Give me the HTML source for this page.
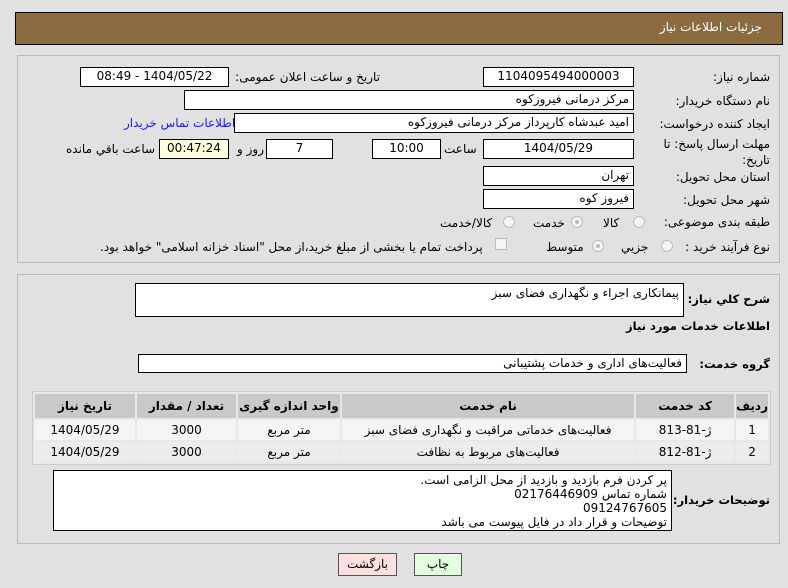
<!DOCTYPE html>
<html><head><meta charset="utf-8"><style>
body{margin:0;width:788px;height:588px;background:#e1e1e1;font-family:"DejaVu Sans","Liberation Sans",sans-serif;font-size:12px;color:#000;position:relative;overflow:hidden;direction:rtl}
.a{position:absolute;white-space:nowrap}
.box{position:absolute;background:#fff;border:1px solid #000;box-sizing:border-box;padding:0 4px;line-height:17px;white-space:nowrap;overflow:hidden}
.c{text-align:center}
.r{text-align:right}
.lbl{position:absolute;white-space:nowrap;right:18px}
.b{font-weight:bold;font-size:11.5px;letter-spacing:-0.3px}
.rad{position:absolute;width:12px;height:12px;border-radius:50%;border:1px solid #bbb;background:#f4f4f4;box-sizing:border-box}
.rad.on::after{content:"";position:absolute;left:3px;top:3px;width:4px;height:4px;border-radius:50%;background:#bbb}
table{border-collapse:separate;border-spacing:2px;position:absolute;left:32px;top:391px;width:739px;background:#e8e8e8;border:1px solid #ccc}
td,th{text-align:center;height:20px;font-size:12px;padding:0}
th{background:#c9c9c9;height:24px;font-weight:bold}
td{background:#f4f4f4}
tr.e td{background:#ececec}
</style></head><body>
<div class="a" style="left:15px;top:12px;width:768px;height:33px;background:#8c6b40;border:1px solid #000;box-sizing:border-box"></div>
<div class="a" style="right:26px;top:20px;color:#fff;font-size:12px">جزئیات اطلاعات نیاز</div>

<div class="a" style="left:17px;top:55px;width:763px;height:208px;border:1px solid #bbb;box-sizing:border-box"></div>
<div class="lbl" style="top:70px">شماره نیاز:</div>
<div class="box c" style="left:483px;top:67px;width:151px;height:20px">1104095494000003</div>
<div class="a" style="right:408px;top:70px">تاریخ و ساعت اعلان عمومی:</div>
<div class="box c" style="left:80px;top:67px;width:149px;height:20px">1404/05/22 - 08:49</div>

<div class="lbl" style="top:94px">نام دستگاه خریدار:</div>
<div class="box r" style="left:184px;top:90px;width:450px;height:20px">مرکز درمانی فیروزکوه</div>

<div class="lbl" style="top:117px">ایجاد کننده درخواست:</div>
<div class="box r" style="left:234px;top:113px;width:400px;height:20px">امید عبدشاه کارپرداز مرکز درمانی فیروزکوه</div>
<div class="a" style="left:124px;top:116px;color:#1a1aff">اطلاعات تماس خریدار</div>

<div class="lbl" style="top:136px;line-height:16px">مهلت ارسال پاسخ: تا<br>تاریخ:</div>
<div class="box c" style="left:483px;top:139px;width:151px;height:20px">1404/05/29</div>
<div class="a" style="left:444px;top:142px">ساعت</div>
<div class="box c" style="left:372px;top:139px;width:69px;height:20px">10:00</div>
<div class="box c" style="left:266px;top:139px;width:67px;height:20px">7</div>
<div class="a" style="left:237px;top:142px">روز و</div>
<div class="box c" style="left:159px;top:139px;width:70px;height:20px;background:#ffffe0">00:47:24</div>
<div class="a" style="left:66px;top:142px">ساعت باقي مانده</div>

<div class="lbl" style="top:170px">استان محل تحویل:</div>
<div class="box r" style="left:483px;top:166px;width:151px;height:20px">تهران</div>
<div class="lbl" style="top:193px">شهر محل تحویل:</div>
<div class="box r" style="left:483px;top:189px;width:151px;height:20px">فیروز کوه</div>

<div class="lbl" style="top:215px">طبقه بندی موضوعی:</div>
<div class="rad" style="left:633px;top:216px"></div><div class="a" style="left:603px;top:216px">کالا</div>
<div class="rad on" style="left:571px;top:216px"></div><div class="a" style="left:533px;top:216px">خدمت</div>
<div class="rad" style="left:503px;top:216px"></div><div class="a" style="left:440px;top:216px">کالا/خدمت</div>

<div class="lbl" style="top:240px">نوع فرآیند خرید :</div>
<div class="rad" style="left:661px;top:240px"></div><div class="a" style="left:621px;top:240px">جزیي</div>
<div class="rad on" style="left:592px;top:240px"></div><div class="a" style="left:546px;top:240px">متوسط</div>
<div class="a" style="left:495px;top:238px;width:12px;height:12px;border:1px solid #bbb;background:#f4f4f4;box-sizing:border-box"></div>
<div class="a" style="left:100px;top:240px">پرداخت تمام یا بخشی از مبلغ خرید،از محل "اسناد خزانه اسلامی" خواهد بود.</div>

<div class="a" style="left:17px;top:274px;width:763px;height:270px;border:1px solid #bbb;box-sizing:border-box"></div>
<div class="lbl b" style="top:292px">شرح کلي نیاز:</div>
<div class="box r" style="left:135px;top:283px;width:549px;height:34px;line-height:18px">پیمانکاری اجراء و نگهداری فضای سبز</div>
<div class="lbl b" style="top:319px">اطلاعات خدمات مورد نیاز</div>
<div class="lbl b" style="top:357px">گروه خدمت:</div>
<div class="box r" style="left:138px;top:354px;width:549px;height:19px">فعالیت‌های اداری و خدمات پشتیبانی</div>

<table>
<tr><th style="width:27px">ردیف</th><th style="width:98px">کد خدمت</th><th>نام خدمت</th><th style="width:102px">واحد اندازه گیری</th><th style="width:99px">تعداد / مقدار</th><th style="width:100px">تاریخ نیاز</th></tr>
<tr><td>1</td><td>ژ-81-813</td><td>فعالیت‌های خدماتی مراقبت و نگهداری فضای سبز</td><td>متر مربع</td><td>3000</td><td>1404/05/29</td></tr>
<tr class="e"><td>2</td><td>ژ-81-812</td><td>فعالیت‌های مربوط به نظافت</td><td>متر مربع</td><td>3000</td><td>1404/05/29</td></tr>
</table>

<div class="lbl b" style="top:493px">توضیحات خریدار:</div>
<div class="box r" style="left:53px;top:470px;width:619px;height:61px;line-height:14px;padding-top:2px">پر کردن فرم بازدید و بازدید از محل الزامی است.<br>شماره تماس 02176446909<br>09124767605<br>توضیحات و قرار داد در فایل پیوست می باشد</div>

<div class="box c" style="left:338px;top:553px;width:59px;height:23px;line-height:21px;background:#ffe0e0;border-color:#555">بازگشت</div>
<div class="box c" style="left:414px;top:553px;width:48px;height:23px;line-height:21px;background:#e4ffe0;border-color:#555">چاپ</div>
</body></html>
